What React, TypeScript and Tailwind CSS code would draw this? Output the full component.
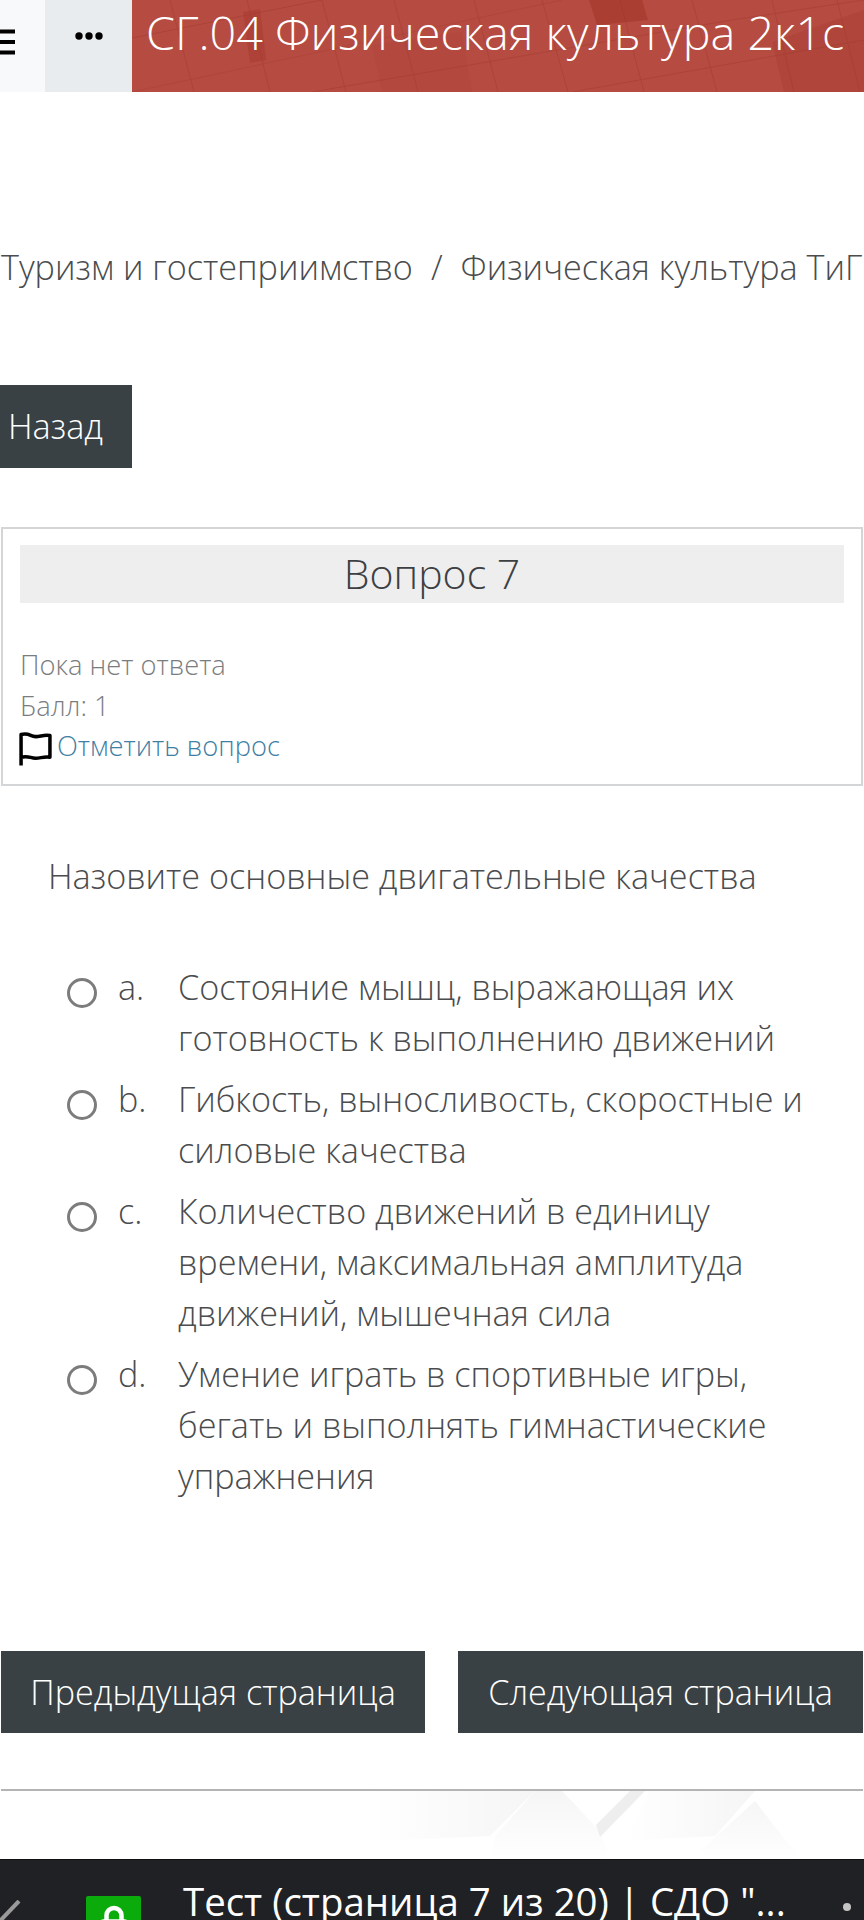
import { Lock } from 'lucide-react';

const options = [
  { letter: 'a.', lines: ['Состояние мышц, выражающая их', 'готовность к выполнению движений'] },
  { letter: 'b.', lines: ['Гибкость, выносливость, скоростные и', 'силовые качества'] },
  { letter: 'c.', lines: ['Количество движений в единицу', 'времени, максимальная амплитуда', 'движений, мышечная сила'] },
  { letter: 'd.', lines: ['Умение играть в спортивные игры,', 'бегать и выполнять гимнастические', 'упражнения'] },
];

function HeaderPattern() {
  return (
    <svg className="absolute inset-0 h-full w-full" viewBox="0 0 732 92" preserveAspectRatio="none">
      <polygon points="111,12 128,9 134,60 118,63" fill="#a83a30" opacity="0.5" />
      <polygon points="457,0 510,0 516,20 465,25" fill="#a53a2e" opacity="0.75" />
      <polygon points="640,42 732,10 732,92 652,92" fill="#a83f33" opacity="0.4" />
      <polygon points="240,45 330,32 340,92 250,92" fill="#ad4337" opacity="0.25" />
      <g stroke="#9c382e" strokeWidth="1" opacity="0.38" fill="none">
        <path d="M0 38 L190 0" />
        <path d="M0 92 L430 0" opacity="0.7" />
        <path d="M180 92 L600 20 L732 0" />
        <path d="M440 92 L732 40" />
        <path d="M38 0 L62 92" />
        <path d="M115 0 L138 92" />
        <path d="M190 0 L214 92" />
        <path d="M262 0 L286 92" />
        <path d="M342 0 L366 92" />
        <path d="M410 0 L436 92" />
        <path d="M488 0 L512 92" />
        <path d="M560 0 L585 92" />
        <path d="M640 0 L662 92" />
        <path d="M705 0 L728 92" />
      </g>
    </svg>
  );
}

function FooterPattern() {
  return (
    <svg className="absolute inset-0 h-full w-full" viewBox="0 0 864 68" preserveAspectRatio="none">
      <defs>
        <linearGradient id="fade" x1="0" y1="0" x2="0" y2="1">
          <stop offset="0" stopColor="#efefef" />
          <stop offset="1" stopColor="#ffffff" />
        </linearGradient>
        <linearGradient id="fadeLeft" x1="0" y1="0" x2="1" y2="0">
          <stop offset="0" stopColor="#ffffff" />
          <stop offset="1" stopColor="#f3f3f3" />
        </linearGradient>
      </defs>
      <polygon points="370,0 535,0 490,45 380,50" fill="url(#fadeLeft)" opacity="0.8" />
      <polygon points="535,0 562,0 600,40 610,68 490,68 495,45" fill="url(#fade)" opacity="0.6" />
      <polygon points="645,0 600,46 596,34 630,0" fill="#eeeeee" />
      <polygon points="650,0 755,0 715,45 625,50" fill="url(#fadeLeft)" opacity="0.8" />
      <polygon points="755,10 800,68 720,68 700,60" fill="url(#fade)" opacity="0.6" />
    </svg>
  );
}

export default function App() {
  return (
    <div className="h-[1920px] w-[864px] overflow-hidden bg-white font-['Open_Sans',sans-serif] font-light text-[#4a4c4e]">
      {/* Header */}
      <div className="flex h-[92px]">
        <div className="flex w-[45px] items-center overflow-hidden bg-[#f8f9fa] pb-[8px]">
          <svg width="15" height="26" viewBox="0 0 15 26">
            <path d="M0 2.5H15M0 13H15M0 23.5H15" stroke="#000" strokeWidth="4" strokeLinecap="round" />
          </svg>
        </div>
        <div className="flex w-[87px] items-center justify-center bg-[#e9ecef] pb-[20px]">
          <svg width="28" height="8" viewBox="0 0 28 8">
            <circle cx="4" cy="4" r="3.7" fill="#000" />
            <circle cx="14" cy="4" r="3.7" fill="#000" />
            <circle cx="24" cy="4" r="3.7" fill="#000" />
          </svg>
        </div>
        <div className="relative flex-1 overflow-hidden bg-[#b64b41] pl-[14px]">
          <HeaderPattern />
          <h1 className="relative whitespace-nowrap text-[46.7px] leading-[64px] font-light text-white">СГ.04 Физическая культура 2к1с</h1>
        </div>
      </div>

      {/* Breadcrumb */}
      <div className="mt-[152px] flex h-[46px] items-center gap-[18px] overflow-hidden whitespace-nowrap pl-[1px] text-[34.2px]">
        <span>Туризм и гостеприимство</span>
        <span>/</span>
        <span>Физическая культура ТиГ</span>
      </div>

      <button className="mt-[95px] flex h-[83px] w-[132px] items-center bg-[#3a4145] pb-[2px] pl-[8px] text-[34.2px] font-light text-white">Назад</button>

      {/* Question info */}
      <div className="mx-[1px] mt-[59px] h-[259px] border-2 border-[#d3d5d6] px-[17px] pt-[16px]">
        <div className="flex h-[58px] items-center justify-center bg-[#eeeeee] text-[41px] text-[#3d4042]">Вопрос 7</div>
        <div className="mt-[41px] text-[27.3px] leading-[41px] text-[#7a7d7f]">Пока нет ответа</div>
        <div className="text-[27.3px] leading-[41px] text-[#7a7d7f]">Балл: 1</div>
        <div className="flex h-[41px] items-center gap-[5px] text-[27.3px] text-[#3f7fa3]">
          <svg className="-ml-[1px] mt-[5px]" width="33" height="36" viewBox="0 0 32 34" fill="none" stroke="#000" strokeWidth="3.4" strokeLinejoin="round">
            <path d="M2 33V3c8-2 9 2 14 2s8-2 14-1v21c-6-1-9 1-14 1S9 23 2 25" />
          </svg>
          <span>Отметить вопрос</span>
        </div>
      </div>

      {/* Question */}
      <div className="mt-[66px] pl-[48px] text-[34.2px] leading-[48px]">Назовите основные двигательные качества</div>

      <div className="mt-[61px] flex flex-col gap-[10px]">
        {options.map((o) => (
          <div key={o.letter} className="flex pl-[67px] text-[34.2px] leading-[51px]">
            <div className="mt-[17px] h-[30px] w-[30px] shrink-0 rounded-full border-[3px] border-[#7c7c7c]"></div>
            <div className="w-[82px] shrink-0 pl-[21px]">{o.letter}</div>
            <div className="-ml-[1px]">
              {o.lines.map((l) => (
                <div key={l} className="whitespace-nowrap">{l}</div>
              ))}
            </div>
          </div>
        ))}
      </div>

      {/* Navigation */}
      <div className="mt-[150px] flex justify-between px-[1px]">
        <button className="h-[82px] w-[424px] bg-[#3a4145] text-[34.2px] font-light text-white">Предыдущая страница</button>
        <button className="h-[82px] w-[405px] bg-[#3a4145] text-[34.2px] font-light text-white">Следующая страница</button>
      </div>

      <div className="mx-[1px] mt-[56px] border-t-2 border-[#b4b4b4]"></div>
      <div className="relative h-[68px] overflow-hidden">
        <FooterPattern />
      </div>

      {/* Tab title bar */}
      <div className="relative flex h-[61px] overflow-hidden border-t border-[#111] bg-[#202124] font-normal text-white">
        <svg className="absolute left-0 top-[40px]" width="22" height="22" viewBox="0 0 22 22">
          <path d="M19 1L0 21" stroke="#9a9a9a" strokeWidth="4" />
        </svg>
        <div className="absolute left-[86px] top-[36px] flex h-[60px] w-[55px] justify-center rounded-[2px] bg-[#0aab0a] pt-[9px]">
          <Lock className="h-[36px] w-[36px]" strokeWidth={3} />
        </div>
        <div className="ml-[183px] whitespace-nowrap pt-[22px] text-[38.4px] leading-[38px]">Тест (страница 7 из 20) | СДО "...</div>
        <div className="absolute left-[843px] top-[43px] h-[8px] w-[8px] rounded-full bg-[#c4c4c4]"></div>
      </div>
    </div>
  );
}
